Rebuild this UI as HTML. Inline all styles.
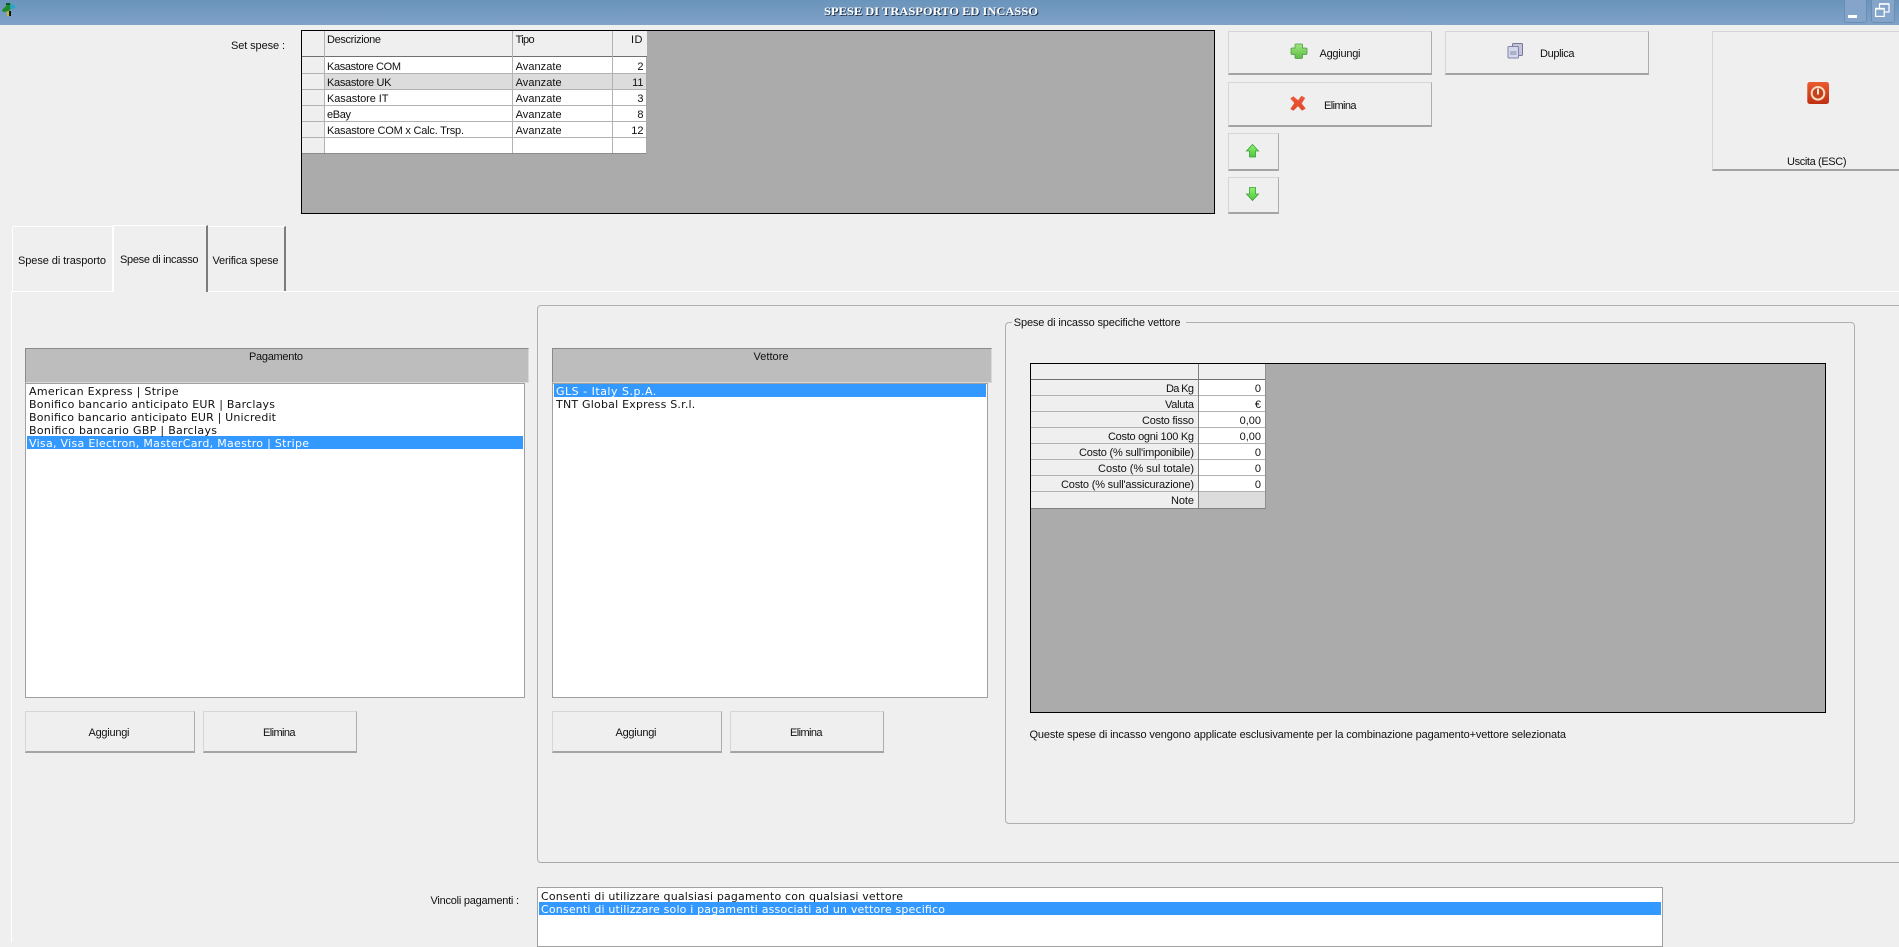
<!DOCTYPE html>
<html lang="it">
<head>
<meta charset="utf-8">
<title>Spese di trasporto ed incasso</title>
<style>
html,body{margin:0;padding:0;width:1899px;height:942px;overflow:hidden;background:#efefef;font-family:"Liberation Sans",sans-serif}
.a{position:absolute;box-sizing:border-box}
.btn{position:absolute;box-sizing:border-box;background:#efefef;border:1px solid #d6d6d6;border-right:1px solid #adadad;border-bottom:2px solid #a4a4a4}
.grid{position:absolute;box-sizing:border-box;background:#ababab;border:1px solid #000}
.hl{position:absolute;height:1px;background:#b2b2b2}
.vl{position:absolute;width:1px;background:#b2b2b2}
svg{position:absolute;left:0;top:0}
text{font-family:"Liberation Sans",sans-serif;font-size:11px;fill:#111}
.dj{font-family:"DejaVu Sans",sans-serif;font-size:11px}
</style>
</head>
<body>
<!-- title bar -->
<div class="a" style="left:0;top:0;width:1899px;height:25px;background:linear-gradient(#6a94bb,#7fa2c9)"></div>
<div class="a" style="left:1844px;top:-2px;width:23px;height:25px;background:#84a5c9;border:1px solid #6a8db3;border-radius:3px"></div>
<div class="a" style="left:1871px;top:-2px;width:24px;height:25px;background:#84a5c9;border:1px solid #6a8db3;border-radius:3px"></div>

<!-- set grid -->
<div class="grid" style="left:301px;top:30px;width:914px;height:184px"></div>
<div class="a" style="left:302px;top:31px;width:345px;height:123px;background:#fff;border-bottom:1px solid #8c8c8c;border-right:1px solid #a8a8a8"></div>
<div class="a" style="left:302px;top:31px;width:345px;height:26px;background:#efefef;border-bottom:1px solid #707070"></div>
<div class="a" style="left:302px;top:57px;width:23px;height:96px;background:#efefef"></div>
<div class="a" style="left:325px;top:73px;width:321px;height:16px;background:#dcdcdc"></div>
<div class="hl" style="left:302px;top:73px;width:344px"></div>
<div class="hl" style="left:302px;top:89px;width:344px"></div>
<div class="hl" style="left:302px;top:105px;width:344px"></div>
<div class="hl" style="left:302px;top:121px;width:344px"></div>
<div class="hl" style="left:302px;top:137px;width:344px"></div>
<div class="vl" style="left:324px;top:31px;height:122px"></div>
<div class="vl" style="left:512px;top:31px;height:122px"></div>
<div class="vl" style="left:612px;top:31px;height:122px"></div>

<!-- top buttons -->
<div class="btn" style="left:1228px;top:31px;width:204px;height:44px"></div>
<div class="btn" style="left:1445px;top:31px;width:204px;height:44px"></div>
<div class="btn" style="left:1228px;top:82px;width:204px;height:45px"></div>
<div class="btn" style="left:1228px;top:133px;width:51px;height:38px"></div>
<div class="btn" style="left:1228px;top:177px;width:51px;height:37px"></div>
<div class="btn" style="left:1712px;top:31px;width:190px;height:140px"></div>

<!-- tabs -->
<div class="a" style="left:11px;top:291px;width:1888px;height:1px;background:#fff"></div>
<div class="a" style="left:11px;top:291px;width:1px;height:651px;background:#fff"></div>
<div class="a" style="left:12px;top:226px;width:101px;height:65px;border:1px solid #fff;border-bottom:0;border-radius:2px 0 0 0"></div>
<div class="a" style="left:113px;top:225px;width:95px;height:67px;background:#efefef;border-top:1px solid #fff;border-left:1px solid #fff;border-right:2px solid #7c7c7c"></div>
<div class="a" style="left:208px;top:226px;width:78px;height:65px;border-top:1px solid #fff;border-right:2px solid #7c7c7c"></div>

<!-- right group -->
<div class="a" style="left:537px;top:305px;width:1370px;height:558px;border:1px solid #b0b0b0;border-bottom:1px solid #a8a8a8;border-radius:4px"></div>
<div class="a" style="left:1005px;top:322px;width:850px;height:502px;border:1px solid #b0b0b0;border-radius:4px"></div>
<div class="a" style="left:1012px;top:318px;width:174px;height:9px;background:#efefef"></div>

<!-- pagamento -->
<div class="a" style="left:25px;top:348px;width:504px;height:35px;background:#bdbdbd;border:1px solid #d8d8d8;border-top:1px solid #8a8a8a;border-left:1px solid #8a8a8a"></div>
<div class="a" style="left:25px;top:383px;width:500px;height:315px;background:#fff;border:1px solid #a0a0a0"></div>
<div class="a" style="left:27px;top:436px;width:496px;height:13px;background:#3399ff"></div>

<!-- vettore -->
<div class="a" style="left:552px;top:348px;width:440px;height:35px;background:#bdbdbd;border:1px solid #d8d8d8;border-top:1px solid #8a8a8a;border-left:1px solid #8a8a8a"></div>
<div class="a" style="left:552px;top:383px;width:436px;height:315px;background:#fff;border:1px solid #a0a0a0"></div>
<div class="a" style="left:554px;top:384px;width:432px;height:13px;background:#3399ff"></div>

<!-- lower buttons -->
<div class="btn" style="left:25px;top:711px;width:170px;height:42px"></div>
<div class="btn" style="left:203px;top:711px;width:154px;height:42px"></div>
<div class="btn" style="left:552px;top:711px;width:170px;height:42px"></div>
<div class="btn" style="left:730px;top:711px;width:154px;height:42px"></div>

<!-- vendor grid -->
<div class="grid" style="left:1030px;top:363px;width:796px;height:350px"></div>
<div class="a" style="left:1031px;top:364px;width:235px;height:145px;background:#fff;border-bottom:1px solid #808080;border-right:1px solid #909090"></div>
<div class="a" style="left:1031px;top:364px;width:234px;height:16px;background:#efefef;border-bottom:1px solid #707070"></div>
<div class="a" style="left:1031px;top:380px;width:167px;height:128px;background:#efefef"></div>
<div class="a" style="left:1199px;top:492px;width:66px;height:16px;background:#dcdcdc"></div>
<div class="hl" style="left:1031px;top:395px;width:234px"></div>
<div class="hl" style="left:1031px;top:411px;width:234px"></div>
<div class="hl" style="left:1031px;top:427px;width:234px"></div>
<div class="hl" style="left:1031px;top:443px;width:234px"></div>
<div class="hl" style="left:1031px;top:459px;width:234px"></div>
<div class="hl" style="left:1031px;top:475px;width:234px"></div>
<div class="hl" style="left:1031px;top:491px;width:234px"></div>
<div class="vl" style="left:1198px;top:364px;height:144px;background:#808080"></div>

<!-- vincoli -->
<div class="a" style="left:537px;top:887px;width:1126px;height:60px;background:#fff;border:1px solid #a0a0a0"></div>
<div class="a" style="left:539px;top:902px;width:1122px;height:13px;background:#3399ff"></div>

<svg width="1899" height="942" viewBox="0 0 1899 942">
  <defs>
    <linearGradient id="gp" x1="0" y1="0" x2="0" y2="1"><stop offset="0" stop-color="#a0e67c"/><stop offset="1" stop-color="#5cbc48"/></linearGradient>
    <linearGradient id="gr" x1="0" y1="0" x2="0" y2="1"><stop offset="0" stop-color="#f0573a"/><stop offset="1" stop-color="#e04a2a"/></linearGradient>
    <linearGradient id="ga" x1="0" y1="0" x2="0" y2="1"><stop offset="0" stop-color="#8cf56a"/><stop offset="1" stop-color="#4fc63f"/></linearGradient>
    <linearGradient id="gx" x1="0" y1="0" x2="0" y2="1"><stop offset="0" stop-color="#ec5a30"/><stop offset="1" stop-color="#bf2f12"/></linearGradient>
  </defs>

  <!-- app icon -->
  <rect x="7" y="11" width="2" height="5" fill="#d0b820"/><rect x="9" y="11" width="2" height="5" fill="#111"/>
  <path d="M2 10 L6 6 L8 3 L11 4 L11 8 L9 11 L3 12Z" fill="#1f8a2a"/>
  <path d="M10 5 L13 4 L16 7 L13 9 L10 8Z" fill="#28a4c8"/>
  <rect x="6" y="3" width="4" height="2" fill="#0a5a20"/>

  <!-- window buttons -->
  <rect x="1848" y="15" width="9" height="3" fill="#fff"/>
  <path d="M1879.500 8V3.800H1889V12H1884.500" fill="none" stroke="#fff" stroke-width="1.200"/>
  <rect x="1879.500" y="3.300" width="9.500" height="1.500" fill="#fff"/>
  <rect x="1875.600" y="8.400" width="8.600" height="8" fill="none" stroke="#fff" stroke-width="1.200"/>
  <rect x="1875.600" y="8" width="8.600" height="1.600" fill="#fff"/>

  <!-- plus -->
  <path d="M1296 44h5.500a1 1 0 0 1 1 1v3h3.500a1 1 0 0 1 1 1v4.500a1 1 0 0 1-1 1h-3.500v3a1 1 0 0 1-1 1H1296a1 1 0 0 1-1-1v-3h-3a1 1 0 0 1-1-1V49a1 1 0 0 1 1-1h3v-3a1 1 0 0 1 1-1z" fill="url(#gp)" stroke="#4c9c42" stroke-width=".8"/>
  <!-- x -->
  <path d="M1293.500 96.500l4.500 4 3.500-4.500 3.500 2-3.500 5.500 4 5-3.500 2-4-4.500-4.500 4.500-3-1.500 4-6-4-4.500z" fill="url(#gr)" stroke="#e66a50" stroke-width=".5"/>
  <!-- duplica -->
  <rect x="1512.500" y="43.500" width="10" height="12" rx="1" fill="#c4c4dc" stroke="#77779a"/>
  <rect x="1508" y="46.500" width="10.500" height="11.500" rx="1" fill="#d4d8ea" stroke="#8282a8"/>
  <rect x="1510" y="51" width="6.500" height="4" fill="#a8b2cc"/>
  <!-- up / down -->
  <path d="M1252.500 144.500l6 6.500h-3v6h-6v-6h-3z" fill="url(#ga)" stroke="#3c9c3c" stroke-width=".8"/>
  <path d="M1249.500 187.500h6v6.500h3l-6 6.500-6-6.500h3z" fill="url(#ga)" stroke="#3c9c3c" stroke-width=".8"/>
  <!-- power -->
  <rect x="1807.300" y="82" width="21.700" height="22" rx="2.500" fill="url(#gx)"/>
  <circle cx="1818" cy="93.300" r="6.300" fill="#c5401c" stroke="#f8dcc0" stroke-width="2"/>
  <rect x="1817" y="88.500" width="2" height="6" fill="#f8e4d0"/>

  <!-- title -->
  <text x="825" y="16" textLength="214" lengthAdjust="spacingAndGlyphs" style="font-weight:bold;font-size:12px;font-family:'Liberation Serif',serif;fill:#20344c">SPESE DI TRASPORTO ED INCASSO</text>
  <text x="824" y="15" textLength="214" lengthAdjust="spacingAndGlyphs" style="font-weight:bold;font-size:12px;font-family:'Liberation Serif',serif;fill:#fff">SPESE DI TRASPORTO ED INCASSO</text>

  <text x="231" y="49" textLength="54">Set spese :</text>
  <text x="327" y="43" textLength="54">Descrizione</text>
  <text x="515.600" y="43" textLength="19">Tipo</text>
  <text x="631" y="43" textLength="11.500">ID</text>

  <text x="327" y="70" textLength="74">Kasastore COM</text>
  <text x="327" y="86" textLength="64.500">Kasastore UK</text>
  <text x="327" y="102" textLength="61.500">Kasastore IT</text>
  <text x="327" y="118" textLength="24">eBay</text>
  <text x="327" y="134" textLength="137">Kasastore COM x Calc. Trsp.</text>
  <text x="515.600" y="70" textLength="46">Avanzate</text>
  <text x="515.600" y="86" textLength="46">Avanzate</text>
  <text x="515.600" y="102" textLength="46">Avanzate</text>
  <text x="515.600" y="118" textLength="46">Avanzate</text>
  <text x="515.600" y="134" textLength="46">Avanzate</text>
  <text x="643.500" y="70" text-anchor="end">2</text>
  <text x="643.500" y="86" text-anchor="end">11</text>
  <text x="643.500" y="102" text-anchor="end">3</text>
  <text x="643.500" y="118" text-anchor="end">8</text>
  <text x="643.500" y="134" text-anchor="end">12</text>

  <text x="1319.500" y="57" textLength="41">Aggiungi</text>
  <text x="1540" y="57" textLength="34.500">Duplica</text>
  <text x="1324" y="109" textLength="32.500">Elimina</text>
  <text x="1787" y="165" textLength="59.500">Uscita (ESC)</text>

  <text x="18" y="264" textLength="88">Spese di trasporto</text>
  <text x="120" y="263" textLength="78.500">Spese di incasso</text>
  <text x="212.500" y="264" textLength="66">Verifica spese</text>

  <text x="249" y="360" textLength="54">Pagamento</text>
  <text x="753.500" y="360" textLength="35">Vettore</text>

  <text class="dj" x="29" y="395" textLength="149.600">American Express | Stripe</text>
  <text class="dj" x="29" y="408" textLength="246">Bonifico bancario anticipato EUR | Barclays</text>
  <text class="dj" x="29" y="421" textLength="247">Bonifico bancario anticipato EUR | Unicredit</text>
  <text class="dj" x="29" y="434" textLength="188">Bonifico bancario GBP | Barclays</text>
  <text class="dj" x="29" y="447" textLength="280" style="fill:#fff">Visa, Visa Electron, MasterCard, Maestro | Stripe</text>

  <text class="dj" x="556" y="395" textLength="100.300" style="fill:#fff">GLS - Italy S.p.A.</text>
  <text class="dj" x="556" y="408" textLength="139.300">TNT Global Express S.r.l.</text>

  <text x="1013.800" y="326" textLength="166.700">Spese di incasso specifiche vettore</text>

  <text x="1166" y="392" textLength="28">Da Kg</text>
  <text x="1165" y="408" textLength="29">Valuta</text>
  <text x="1142" y="424" textLength="52">Costo fisso</text>
  <text x="1108" y="440" textLength="86">Costo ogni 100 Kg</text>
  <text x="1079" y="456" textLength="115">Costo (% sull'imponibile)</text>
  <text x="1098" y="472" textLength="96">Costo (% sul totale)</text>
  <text x="1061" y="488" textLength="133">Costo (% sull'assicurazione)</text>
  <text x="1171" y="504" textLength="23">Note</text>

  <text x="1261" y="392" text-anchor="end">0</text>
  <text x="1261" y="408" text-anchor="end">€</text>
  <text x="1261" y="424" text-anchor="end">0,00</text>
  <text x="1261" y="440" text-anchor="end">0,00</text>
  <text x="1261" y="456" text-anchor="end">0</text>
  <text x="1261" y="472" text-anchor="end">0</text>
  <text x="1261" y="488" text-anchor="end">0</text>

  <text x="88.500" y="736" textLength="41">Aggiungi</text>
  <text x="263" y="736" textLength="32.500">Elimina</text>
  <text x="615.500" y="736" textLength="41">Aggiungi</text>
  <text x="790" y="736" textLength="32.500">Elimina</text>

  <text x="1029.500" y="738" textLength="536.500">Queste spese di incasso vengono applicate esclusivamente per la combinazione pagamento+vettore selezionata</text>

  <text x="430.500" y="904" textLength="88.500">Vincoli pagamenti :</text>
  <text class="dj" x="541" y="900" textLength="362">Consenti di utilizzare qualsiasi pagamento con qualsiasi vettore</text>
  <text class="dj" x="541" y="913" textLength="404" style="fill:#fff">Consenti di utilizzare solo i pagamenti associati ad un vettore specifico</text>
</svg>
</body>
</html>
